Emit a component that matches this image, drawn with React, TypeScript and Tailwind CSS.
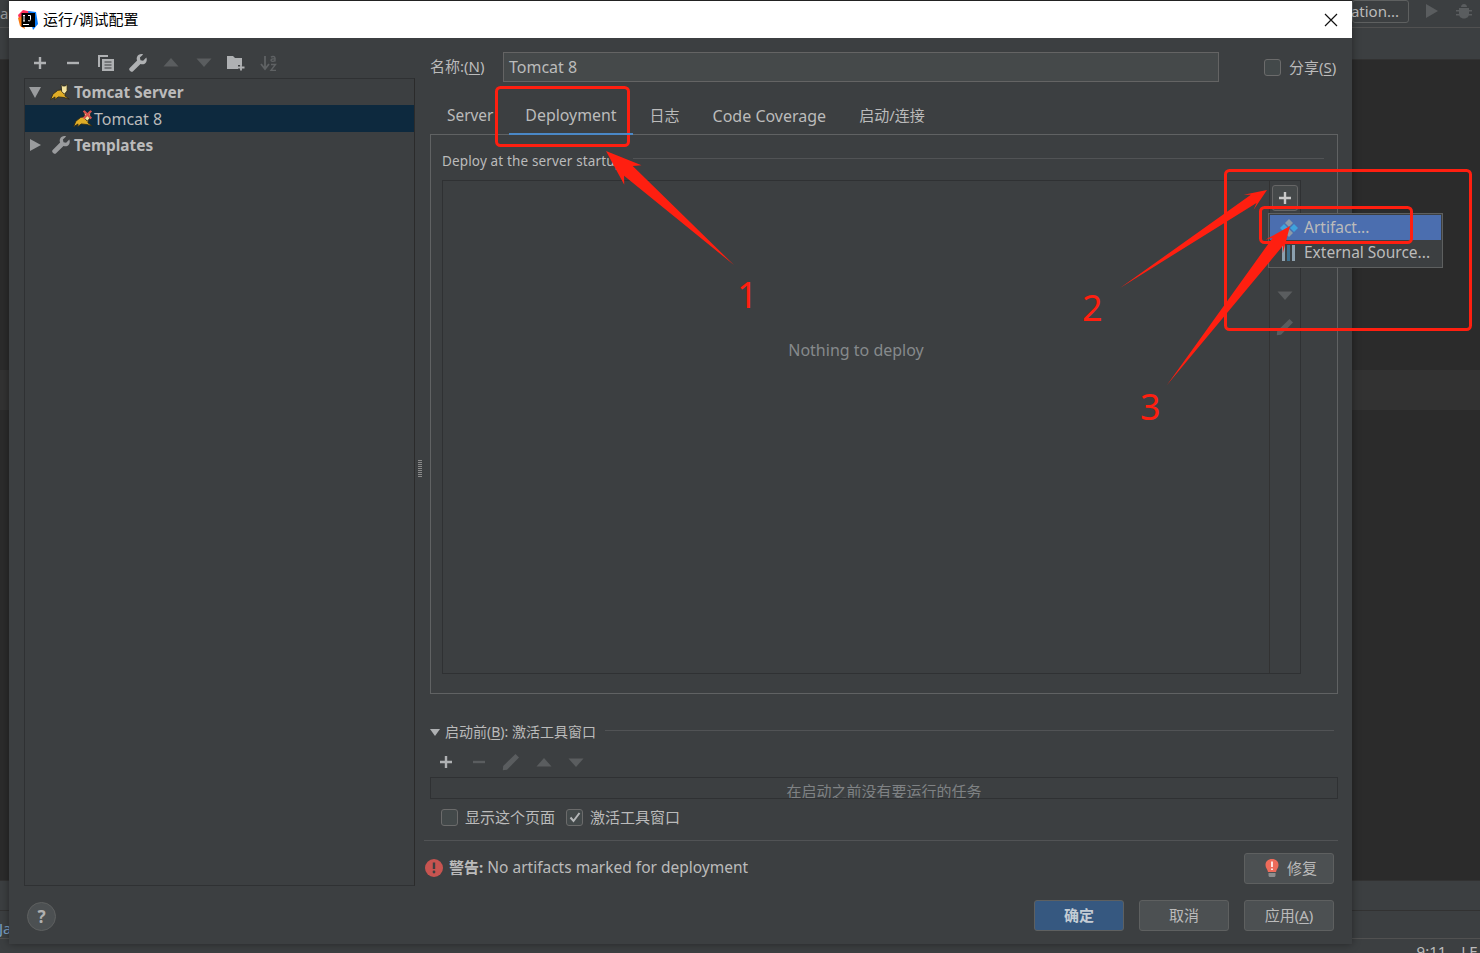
import React from "react";

const font = { fontFamily: '"Noto Sans", "Noto Sans CJK SC", sans-serif' };

function Arrow({ tail, tip, w = 13, head = 36, wing = 15 }: { tail: [number, number]; tip: [number, number]; w?: number; head?: number; wing?: number }) {
  const dx = tip[0] - tail[0];
  const dy = tip[1] - tail[1];
  const len = Math.hypot(dx, dy);
  const ux = dx / len;
  const uy = dy / len;
  const nx = -uy;
  const ny = ux;
  const bx = tip[0] - ux * head;
  const by = tip[1] - uy * head;
  const cx = tip[0] - ux * (head - 6);
  const cy = tip[1] - uy * (head - 6);
  const p = [
    [tail[0], tail[1]],
    [cx + (nx * w) / 2, cy + (ny * w) / 2],
    [bx + nx * wing, by + ny * wing],
    [tip[0], tip[1]],
    [bx - nx * wing, by - ny * wing],
    [cx - (nx * w) / 2, cy - (ny * w) / 2],
  ]
    .map((a) => a.join(","))
    .join(" ");
  return <polygon points={p} fill="#ff1f10" />;
}

const Plus = ({ c = "#afb1b3" }: { c?: string }) => (
  <svg width="14" height="14" viewBox="0 0 14 14"><path d="M7 1v12M1 7h12" stroke={c} strokeWidth="2.4" /></svg>
);
const Minus = ({ c = "#afb1b3" }: { c?: string }) => (
  <svg width="14" height="14" viewBox="0 0 14 14"><path d="M1 7h12" stroke={c} strokeWidth="2.4" /></svg>
);
const Up = ({ c = "#5a5d5f" }: { c?: string }) => (
  <svg width="16" height="9" viewBox="0 0 16 9"><path d="M8 0l7.5 8.5H.5z" fill={c} /></svg>
);
const Down = ({ c = "#5a5d5f" }: { c?: string }) => (
  <svg width="16" height="9" viewBox="0 0 16 9"><path d="M.5 .5h15L8 9z" fill={c} /></svg>
);
const Copy = () => (
  <svg width="18" height="18" viewBox="0 0 18 18">
    <path d="M1 1h10v2H3v10H1z" fill="#afb1b3" />
    <path d="M5 5h12v12H5z" fill="#afb1b3" />
    <path d="M7.5 8h7M7.5 11h7M7.5 14h7" stroke="#3c3f41" strokeWidth="1.2" />
  </svg>
);
const Wrench = ({ c = "#afb1b3" }: { c?: string }) => (
  <svg width="18" height="18" viewBox="0 0 18 18">
    <path d="M17.3 3.6l-3.2 3.2-2.6-.6-.6-2.6L14.1.4c-2.4-.8-5 .1-6 2.3-.6 1.3-.5 2.6 0 3.8L.7 13.9c-.7.7-.7 1.8 0 2.6l.8.8c.7.7 1.9.7 2.6 0l7.4-7.4c1.2.5 2.6.6 3.8 0 2.2-1 3.1-3.9 2-6.3z" fill={c} />
  </svg>
);
const FolderPlus = () => (
  <svg width="18" height="16" viewBox="0 0 18 16">
    <path d="M0 1h6l2 2h7v7h-4v4H0z" fill="#afb1b3" />
    <path d="M14 9.5v6M11 12.5h6.5" stroke="#afb1b3" strokeWidth="1.8" />
  </svg>
);
const SortAz = () => (
  <svg width="18" height="18" viewBox="0 0 18 18">
    <path d="M5 2v12M1 10l4 5 4-5" stroke="#5f6264" strokeWidth="1.8" fill="none" />
    <path d="M11 3.2c1-1 4-1 4 .8v3.6M15 5c-3-.4-4 .2-4 1.3 0 1.4 3 1.4 4 0M11 10.5h4.5L11 16.4h5" stroke="#5f6264" strokeWidth="1.4" fill="none" />
  </svg>
);
const Pencil = ({ c = "#5a5d5f" }: { c?: string }) => (
  <svg width="18" height="18" viewBox="0 0 18 18"><path d="M13.5 1l3.5 3.5L5 16.8 0.8 17.2 1.2 13z" fill={c} /></svg>
);
const Cat = ({ x = false }: { x?: boolean }) => (
  <svg width="18" height="16" viewBox="0 0 18 16" className="scale-110">
    <path d="M0.500 15l2-5 4.500-3.500 4-.5 1.500 3h1.500l-.5 2.500 4 3-5-1.500-5-.5-3.500 2.500.5-2.500z" fill="#e0ad26" stroke="#2f2a18" strokeWidth=".8" />
    <path d="M10 1l1.500 1.500H14L15.500 1v6L13 10l-2.500-2.500z" fill="#f3e3a0" stroke="#2f2a18" strokeWidth=".8" />
    {x && <path d="M9.500 0.500l7 7M16.500 0.500l-7 7" stroke="#d9534f" strokeWidth="2" />}
  </svg>
);
const Check = ({ checked = false }: { checked?: boolean }) => (
  <span className="w-[17px] h-[17px] rounded-[3px] border border-[#6b6b6b] bg-[#43494a] flex items-center justify-center shrink-0">
    {checked && (
      <svg width="12" height="11" viewBox="0 0 12 11"><path d="M1.500 5.500l3 3.500 6-8" stroke="#b4b6b8" strokeWidth="2" fill="none" /></svg>
    )}
  </span>
);
const U = ({ children }: { children: React.ReactNode }) => <span className="underline underline-offset-2">{children}</span>;

const Btn = ({ children, cls = "" }: { children: React.ReactNode; cls?: string }) => (
  <div className={`w-[90px] h-[31px] rounded-[3px] border border-[#5e6060] bg-[#4c5052] flex items-center justify-center text-[15px] text-[#bbbbbb] ${cls}`}>{children}</div>
);

const tabs = [
  { t: "Server", c: "text-[15.4px] pl-[17px] pr-[15.500px] pb-[5px]" },
  { t: "Deployment", c: "text-[15.900px] px-[16.500px] pb-[3px] border-b-2 border-[#4a88c7]" },
  { t: "日志", c: "text-[15px] px-[16.500px] pb-[5px]" },
  { t: "Code Coverage", c: "text-[16px] px-[16.500px] pb-[5px]" },
  { t: "启动/连接", c: "text-[15px] px-[16.500px] pb-[5px]" },
];

export default function App() {
  return (
    <div className="relative w-[1480px] h-[953px] overflow-hidden bg-[#2b2b2b] text-[#bbbbbb]" style={font}>
      {/* IDE behind the dialog */}
      <div className="absolute inset-0 flex flex-col">
        <div className="h-[28px] shrink-0 bg-[#3c3f41] border-b border-[#515151] flex justify-end items-center pr-[8px] relative">
          <span className="absolute left-0 top-[2px] text-[15px] text-[#9a9c9e]">a</span>
          <div className="h-[23px] -mt-[5px] border border-[#5e6060] rounded-[3px] w-[57px] mr-[16px] flex items-center justify-end pr-[9px] text-[15px]">ation...</div>
          <svg width="14" height="16" viewBox="0 0 14 16" className="mr-[17px] -mt-[6px]"><path d="M1 1l12 7-12 7z" fill="#5a5d5f" /></svg>
          <svg width="16" height="16" viewBox="0 0 16 16" className="-mt-[6px]"><path d="M3 5h10v6c0 6-10 6-10 0z M5 4c0-4 6-4 6 0z M0 7h16v1.500H0z M0 11h16v1.500H0z" fill="#5a5d5f" /></svg>
        </div>
        <div className="h-[32px] shrink-0 bg-[#3c3f41] border-b border-[#323232]" />
        <div className="h-[310px] shrink-0" />
        <div className="h-[40px] shrink-0 bg-[#323232]" />
        <div className="h-[470px] shrink-0" />
        <div className="h-[30px] shrink-0 bg-[#3c3f41] border-t border-[#323232]" />
        <div className="h-[28px] shrink-0 bg-[#3c3f41] border-t border-[#323232] text-[15px] text-[#7aa0c4]"><span className="-ml-[1px] block leading-[34px]">Ja</span></div>
        <div className="h-[15px] shrink-0 overflow-hidden bg-[#3c3f41] border-t border-[#515151] flex justify-end gap-[15px] pr-[3px] text-[15px] leading-[24px]"><span>9:11</span><span>LF</span></div>
      </div>

      {/* Dialog */}
      <div className="absolute left-[9px] top-0 w-[1343px] h-[944px] bg-[#3c3f41] flex flex-col shadow-[0_0_8px_rgba(0,0,0,0.4)]">
        <div className="h-[38px] bg-white border-t border-[#222] flex items-center text-black text-[15px] shrink-0">
          <svg width="20" height="20" viewBox="0 0 20 20" className="ml-[9px] mr-[5px]">
            <path d="M0 5l5-5 9 2-6 7-6 3z" fill="#fe315d" />
            <path d="M10 1l8 1 2 12-5 6z" fill="#087cfa" />
            <path d="M0 8l4-2 3 13-5-3z" fill="#f97a12" />
            <rect x="3.500" y="3" width="13.500" height="14" fill="#000" />
            <path d="M5 14.500h6" stroke="#fff" strokeWidth="1" />
            <path d="M6 5.500v5.500M5 5.500h2M5 11h2M10 5.500h2.500v4c0 1.500-1.500 1.500-2.500 1" stroke="#fff" strokeWidth="1" fill="none" />
          </svg>
          <span>运行/调试配置</span>
          <svg width="14" height="14" viewBox="0 0 14 14" className="ml-auto mr-[14px]"><path d="M1 1l12 12M13 1L1 13" stroke="#111" strokeWidth="1.200" /></svg>
        </div>

        <div className="flex flex-1 min-h-0">
          {/* Left */}
          <div className="w-[406px] pl-[15px] shrink-0 flex flex-col">
            <div className="h-[40px] flex items-center shrink-0 pt-[9px]">
              {[<Plus />, <Minus />, <Copy />, <Wrench />, <Up />, <Down />, <FolderPlus />, <SortAz />].map((ic, i) => (
                <span key={i} className="w-[32.7px] flex justify-center items-center">{ic}</span>
              ))}
            </div>
            <div className="h-[808px] border border-[#2f3133] border-r-[#2b2b2b] shrink-0">
              <div className="h-[26px] flex items-center font-bold text-[15.400px]">
                <svg width="12" height="11" viewBox="0 0 12 11" className="ml-[4px] mr-[10px]"><path d="M0 0h12L6 11z" fill="#9a9c9e" /></svg>
                <span className="mr-[5px] flex"><Cat /></span>
                <span className="pt-[2px]">Tomcat Server</span>
              </div>
              <div className="h-[27px] flex items-center bg-[#0d293e] pl-[49px] text-[16px]">
                <span className="flex mr-[2px]"><Cat x /></span>
                <span>Tomcat 8</span>
              </div>
              <div className="h-[26px] flex items-center font-bold text-[15.400px]">
                <svg width="11" height="12" viewBox="0 0 11 12" className="ml-[5px] mr-[11px]"><path d="M0 0l11 6-11 6z" fill="#9a9c9e" /></svg>
                <span className="mr-[4px] flex"><Wrench c="#9a9c9e" /></span>
                <span className="pt-[2px]">Templates</span>
              </div>
            </div>
            <div className="mt-[16px] w-[29px] h-[29px] rounded-full bg-[#4c5052] border border-[#5e6060] flex items-center justify-center font-bold text-[17px] text-[#b0b0b0] ml-[3px]">?</div>
          </div>

          {/* Splitter */}
          <div className="w-[15px] shrink-0 flex items-start pl-[3px] pt-[422px]">
            <div className="w-[4px] h-[17px] bg-[repeating-linear-gradient(0deg,#8a8a8a_0_1px,transparent_1px_2px)]" />
          </div>

          {/* Right */}
          <div className="w-[908px] shrink-0 flex flex-col text-[15px]">
            <div className="h-[30px] mt-[14px] flex items-center shrink-0">
              <span className="w-[73px] pb-[2px]">名称:(<U>N</U>)</span>
              <div className="w-[716px] h-[30px] bg-[#45494a] border border-[#646464] flex items-center pl-[5px] pb-[1px] text-[16px]">Tomcat 8</div>
              <span className="ml-[45px] mr-[8px]"><Check /></span>
              <span>分享(<U>S</U>)</span>
            </div>

            <div className="h-[34px] mt-[19px] flex items-end shrink-0 relative z-10 -mb-[1px]">
              {tabs.map((x) => (
                <div key={x.t} className={`h-[34px] flex items-center ${x.c}`}>{x.t}</div>
              ))}
            </div>

            <div className="h-[560px] border border-[#606263] pl-[11px] shrink-0 flex flex-col">
              <div className="h-[45px] shrink-0 flex items-start pr-[13px]">
                <span className="text-[13.500px] mt-[15px] leading-[22px] tracking-[0.15px]">Deploy at the server startup</span>
                <div className="flex-1 h-px bg-[#515355] mt-[23px] ml-[10px]" />
              </div>
              <div className="w-[859px] h-[494px] border border-[#2f3133] flex shrink-0">
                <div className="flex-1 flex justify-center pt-[157px] text-[#868a8c] text-[16px]">Nothing to deploy</div>
                <div className="w-[31px] border-l border-[#323232] relative flex flex-col items-center pt-[4px] pr-[1px]">
                  <div className="w-[26px] h-[26px] rounded-[3px] border border-[#666] bg-[#45494a] flex items-center justify-center"><Plus c="#c8c8c8" /></div>
                  <div className="mt-[80px] flex"><Down /></div>
                  <div className="mt-[18px] flex"><Pencil /></div>
                  <div className="absolute left-[-2px] top-[32px] w-[175px] h-[55px] bg-[#3c3f41] border border-[#5e6060] p-px text-[15.500px]">
                    <div className="h-[25px] bg-[#4b6eaf] flex items-center">
                      <svg width="20" height="18" viewBox="0 0 20 18" className="ml-[9px] mr-[5px]">
                        <path d="M10 0l4 4-4 4-4-4z" fill="#8c9aa8" />
                        <path d="M5 5l4 4-4 4-4-4z" fill="#3fa3dc" />
                        <path d="M15 5l4 4-4 4-4-4z" fill="#3fa3dc" />
                        <path d="M10 10l4 4-4 4-4-4z" fill="#8c9aa8" />
                      </svg>
                      <span>Artifact...</span>
                    </div>
                    <div className="h-[26px] flex items-center">
                      <svg width="14" height="16" viewBox="0 0 14 16" className="ml-[12px] mr-[8px]">
                        <rect x="0" y="0" width="3" height="16" fill="#8ca0ae" />
                        <rect x="10" y="0" width="3" height="16" fill="#8ca0ae" />
                        <path d="M5 1h3M5 3h3M5 5h3M5 7h3M5 9h3M5 11h3M5 13h3M5 15h3" stroke="#3fa3dc" strokeWidth="1" />
                      </svg>
                      <span>External Source...</span>
                    </div>
                  </div>
                </div>
              </div>
            </div>

            <div className="h-[20px] mt-[28px] flex items-center text-[14px] shrink-0">
              <svg width="10" height="7" viewBox="0 0 10 7" className="mr-[5px]"><path d="M0 0h10L5 7z" fill="#afb1b3" /></svg>
              <span className="-mt-[2px]">启动前(<U>B</U>): 激活工具窗口</span>
              <div className="flex-1 h-px bg-[#515355] ml-[9px] mr-[4px] -mt-[3px]" />
            </div>
            <div className="h-[20px] mt-[10px] flex items-center shrink-0">
              {[<Plus />, <Minus c="#5a5d5f" />, <Pencil />, <Up />, <Down />].map((ic, i) => (
                <span key={i} className="w-[32.500px] flex justify-center">{ic}</span>
              ))}
            </div>
            <div className="h-[22px] mt-[5px] border border-[#2f3133] overflow-hidden flex justify-center text-[#7f8284] text-[15px] leading-[22px] pt-[2px] shrink-0">在启动之前没有要运行的任务</div>
            <div className="h-[18px] mt-[9px] flex items-center pl-[11px] shrink-0">
              <Check />
              <span className="ml-[7px] w-[101px]">显示这个页面</span>
              <Check checked />
              <span className="ml-[7px]">激活工具窗口</span>
            </div>
            <div className="h-px bg-[#515355] mt-[14px] -ml-[6px] shrink-0" />
            <div className="h-[30px] mt-[12px] flex items-center justify-between pr-[4px] -ml-[5px] shrink-0">
              <div className="flex items-center">
                <svg width="18" height="18" viewBox="0 0 18 18" className="mr-[6px]">
                  <circle cx="9" cy="9" r="9" fill="#c75450" />
                  <path d="M9 3.500v6.500" stroke="#3c3f41" strokeWidth="2.400" />
                  <circle cx="9" cy="13" r="1.400" fill="#3c3f41" />
                </svg>
                <span className="text-[15.500px]"><b className="text-[15px]">警告:</b> No artifacts marked for deployment</span>
              </div>
              <Btn cls="pl-[4px]">
                <svg width="14" height="18" viewBox="0 0 14 18" className="mr-[8px]">
                  <path d="M7 0c4 0 6.500 2.500 6.500 6 0 3-2 4-2.500 7h-8C2.500 10 .5 9 .5 6 .5 2.500 3 0 7 0z" fill="#ee6b5a" />
                  <path d="M3.500 14h7v2.500c0 1-1 1.500-1.500 1.500H5c-.5 0-1.500-.5-1.500-1.500z" fill="#8c8c8c" />
                  <path d="M7 2.500v5.500M7 9.500v1.500" stroke="#fff" strokeWidth="1.600" />
                </svg>
                修复
              </Btn>
            </div>
            <div className="mt-[17px] flex justify-end gap-[15px] pr-[4px] shrink-0">
              <Btn cls="bg-[#365880] border-[#4c708c] font-bold text-[#c4ccd4]">确定</Btn>
              <Btn>取消</Btn>
              <Btn>应用(<U>A</U>)</Btn>
            </div>
          </div>
        </div>
      </div>

      {/* Red annotations */}
      <svg className="absolute inset-0 pointer-events-none" width="1480" height="953" viewBox="0 0 1480 953">
        <rect x="496.500" y="87.500" width="132" height="58" rx="4" fill="none" stroke="#ff1f10" strokeWidth="3" />
        <rect x="1225.500" y="170.500" width="245" height="159" rx="4" fill="none" stroke="#ff1f10" strokeWidth="3" />
        <rect x="1260.500" y="207.500" width="151" height="35" rx="4" fill="none" stroke="#ff1f10" strokeWidth="3" />
        <Arrow tail={[734, 265]} tip={[606, 151]} w={13} head={36} wing={13} />
        <Arrow tail={[1120, 288]} tip={[1267, 190]} w={10} head={22} wing={9} />
        <Arrow tail={[1167, 385]} tip={[1290, 226]} w={13} head={26} wing={11} />
      </svg>
      <span className="absolute left-[737px] top-[273px] text-[36px] leading-[44px] text-[#ff1f10]">1</span>
      <span className="absolute left-[1082px] top-[286px] text-[36px] leading-[44px] text-[#ff1f10]">2</span>
      <span className="absolute left-[1140px] top-[385px] text-[36px] leading-[44px] text-[#ff1f10]">3</span>
    </div>
  );
}
